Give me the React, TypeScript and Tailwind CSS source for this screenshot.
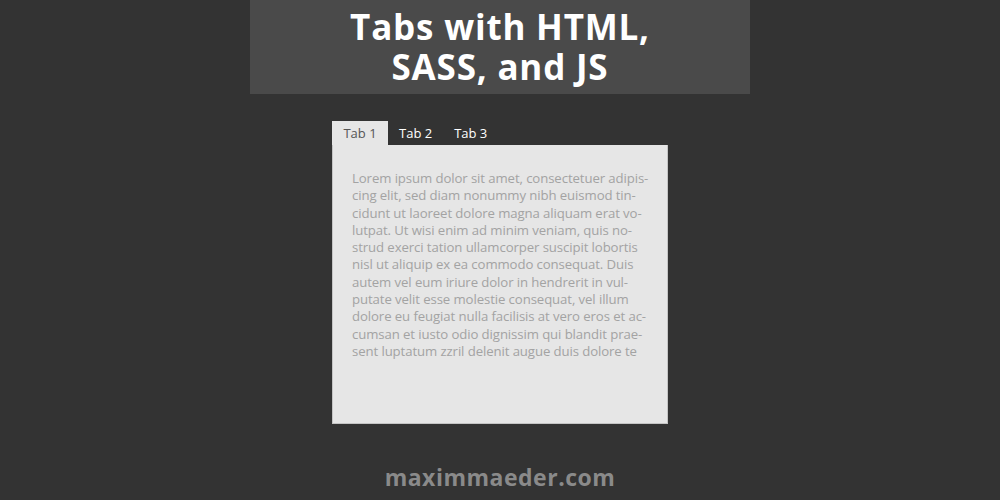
import React, { useState } from "react";

const lines = [
  "Lorem ipsum dolor sit amet, consectetuer adipis-",
  "cing elit, sed diam nonummy nibh euismod tin-",
  "cidunt ut laoreet dolore magna aliquam erat vo-",
  "lutpat. Ut wisi enim ad minim veniam, quis no-",
  "strud exerci tation ullamcorper suscipit lobortis",
  "nisl ut aliquip ex ea commodo consequat. Duis",
  "autem vel eum iriure dolor in hendrerit in vul-",
  "putate velit esse molestie consequat, vel illum",
  "dolore eu feugiat nulla facilisis at vero eros et ac-",
  "cumsan et iusto odio dignissim qui blandit prae-",
  "sent luptatum zzril delenit augue duis dolore te",
];

const tabs = ["Tab 1", "Tab 2", "Tab 3"];

export default function App() {
  const [active, setActive] = useState(0);

  return (
    <div className="w-[1000px] h-[500px] bg-[#333333] flex flex-col items-center overflow-hidden">
      <div className="w-[500px] h-[94px] bg-[#4a4a4a] flex flex-col items-center justify-center pb-[1px]">
        <h1
          className="text-white text-[35px] leading-[40px] font-bold text-center tracking-[0.8px]"
          style={{ fontFamily: '"Open Sans", sans-serif' }}
        >
          Tabs with HTML,
          <br />
          SASS, and JS
        </h1>
      </div>

      <div className="mt-[27px] w-[336px]" style={{ fontFamily: '"Open Sans", sans-serif' }}>
        <div className="flex h-[24px]">
          {tabs.map((t, i) => (
            <button
              key={t}
              onClick={() => setActive(i)}
              className={
                i === active
                  ? "bg-[#e6e6e6] text-[#555555] text-[13px] w-[56px] leading-[24px] text-center"
                  : "text-white text-[13px] px-[11px] leading-[24px]"
              }
            >
              {t}
            </button>
          ))}
        </div>
        <div className="h-[279px] bg-[#e6e6e6] border border-[#c4c4c4] border-t-0 pl-[19px] pt-[25px]">
          <div className="text-[#a3a3a3] text-[13.2px] leading-[17.3px] tracking-[-0.1px]">
            {lines.map((l) => (
              <div key={l} className="whitespace-nowrap">
                {l}
              </div>
            ))}
          </div>
        </div>
      </div>

      <div
        className="mt-[36px] text-[#8a8a8a] text-[23px] font-bold tracking-[0.5px]"
        style={{ fontFamily: '"Open Sans", sans-serif' }}
      >
        maximmaeder.com
      </div>
    </div>
  );
}
